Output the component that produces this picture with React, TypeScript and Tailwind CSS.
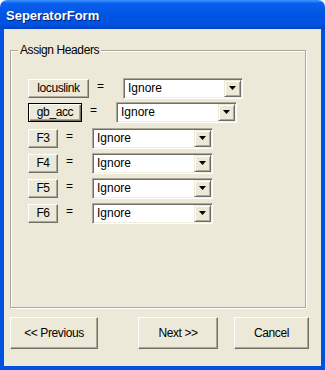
import React from "react";

const font = "font-['Liberation_Sans',Arial,sans-serif]";

function XpButton({
  label,
  className = "",
  isDefault = false,
}: {
  label: string;
  className?: string;
  isDefault?: boolean;
}) {
  const edge = isDefault
    ? "border border-black shadow-[inset_1px_1px_0_#fff,inset_-1px_-1px_0_#716f64,inset_-2px_-2px_0_#aca899]"
    : "border border-t-white border-l-white border-r-[#716f64] border-b-[#716f64] shadow-[inset_-1px_-1px_0_#aca899]";
  return (
    <div
      className={`flex items-center justify-center bg-[#ece9d8] text-black text-[12px] tracking-[-0.4px] ${edge} ${className}`}
    >
      {label}
    </div>
  );
}

function Combo({ className = "" }: { className?: string }) {
  return (
    <div
      className={`flex h-[21px] bg-white border border-t-[#aca899] border-l-[#aca899] border-b-white border-r-white shadow-[inset_1px_1px_0_#716f64,inset_-1px_-1px_0_#f1efe2] p-[1px] ${className}`}
    >
      <div className="flex-1 flex items-center pl-[3px] text-[12px] text-black leading-none">
        Ignore
      </div>
      <div className="w-[17px] h-full flex items-center justify-center bg-[#ece9d8] border border-t-[#ece9d8] border-l-[#ece9d8] border-r-[#716f64] border-b-[#716f64] shadow-[inset_1px_1px_0_#fff,inset_-1px_-1px_0_#aca899]">
        <svg width="7" height="4" viewBox="0 0 7 4">
          <path d="M0 0H7L3.5 4Z" fill="#000" />
        </svg>
      </div>
    </div>
  );
}

function Row({
  label,
  btnW,
  comboW,
  isDefault = false,
  className = "",
}: {
  label: string;
  btnW: string;
  comboW: string;
  isDefault?: boolean;
  className?: string;
}) {
  return (
    <div className={`flex items-center h-[22px] ${className}`}>
      <XpButton label={label} isDefault={isDefault} className={`h-[19px] ${btnW}`} />
      <span className="ml-[8px] w-[26px] text-[12px] text-black -mt-[4px]">=</span>
      <Combo className={comboW} />
    </div>
  );
}

export default function App() {
  return (
    <div className={`w-[325px] h-[370px] flex flex-col bg-white ${font}`}>
      {/* Title bar */}
      <div className="h-[29px] rounded-t-[7px] bg-[linear-gradient(180deg,#3d95ff_0%,#0a5fef_12%,#0055e5_50%,#0052df_86%,#0040c8_100%)] flex items-center pl-[6px] pt-[3px]">
        <span className="text-white font-bold text-[13px] [text-shadow:1px_1px_0_#0a1e6e]">
          SeperatorForm
        </span>
      </div>

      {/* Client area */}
      <div className="flex-1 flex flex-col bg-[#ece9d8] border-x-4 border-b-4 border-[#0052e0]">
        {/* Group box */}
        <div className="mt-[21px] ml-[6px] w-[296px] h-[258px] flex flex-col border border-[#aca899] shadow-[inset_1px_1px_0_#fff,1px_1px_0_#fff]">
          <div className="-mt-[8px] ml-[7px] self-start h-[14px] px-[2px] bg-[#ece9d8] text-[12px] leading-[14px] tracking-[-0.4px] text-black">
            Assign Headers
          </div>
          <div className="flex flex-col pl-[17px] mt-[20px]">
            <Row label="locuslink" btnW="w-[61px]" comboW="w-[120px]" />
            <Row label="gb_acc" btnW="w-[54px]" comboW="w-[121px]" isDefault className="mt-[2px]" />
            <Row label="F3" btnW="w-[30px]" comboW="w-[121px]" className="mt-[4px]" />
            <Row label="F4" btnW="w-[30px]" comboW="w-[121px]" className="mt-[3px]" />
            <Row label="F5" btnW="w-[30px]" comboW="w-[121px]" className="mt-[3px]" />
            <Row label="F6" btnW="w-[30px]" comboW="w-[121px]" className="mt-[3px]" />
          </div>
        </div>

        {/* Wizard buttons */}
        <div className="flex mt-[9px]">
          <XpButton label="<< Previous" className="ml-[6px] w-[88px] h-[32px]" />
          <XpButton label="Next >>" className="ml-[40px] w-[80px] h-[32px]" />
          <XpButton label="Cancel" className="ml-[16px] w-[75px] h-[32px]" />
        </div>
      </div>
    </div>
  );
}
